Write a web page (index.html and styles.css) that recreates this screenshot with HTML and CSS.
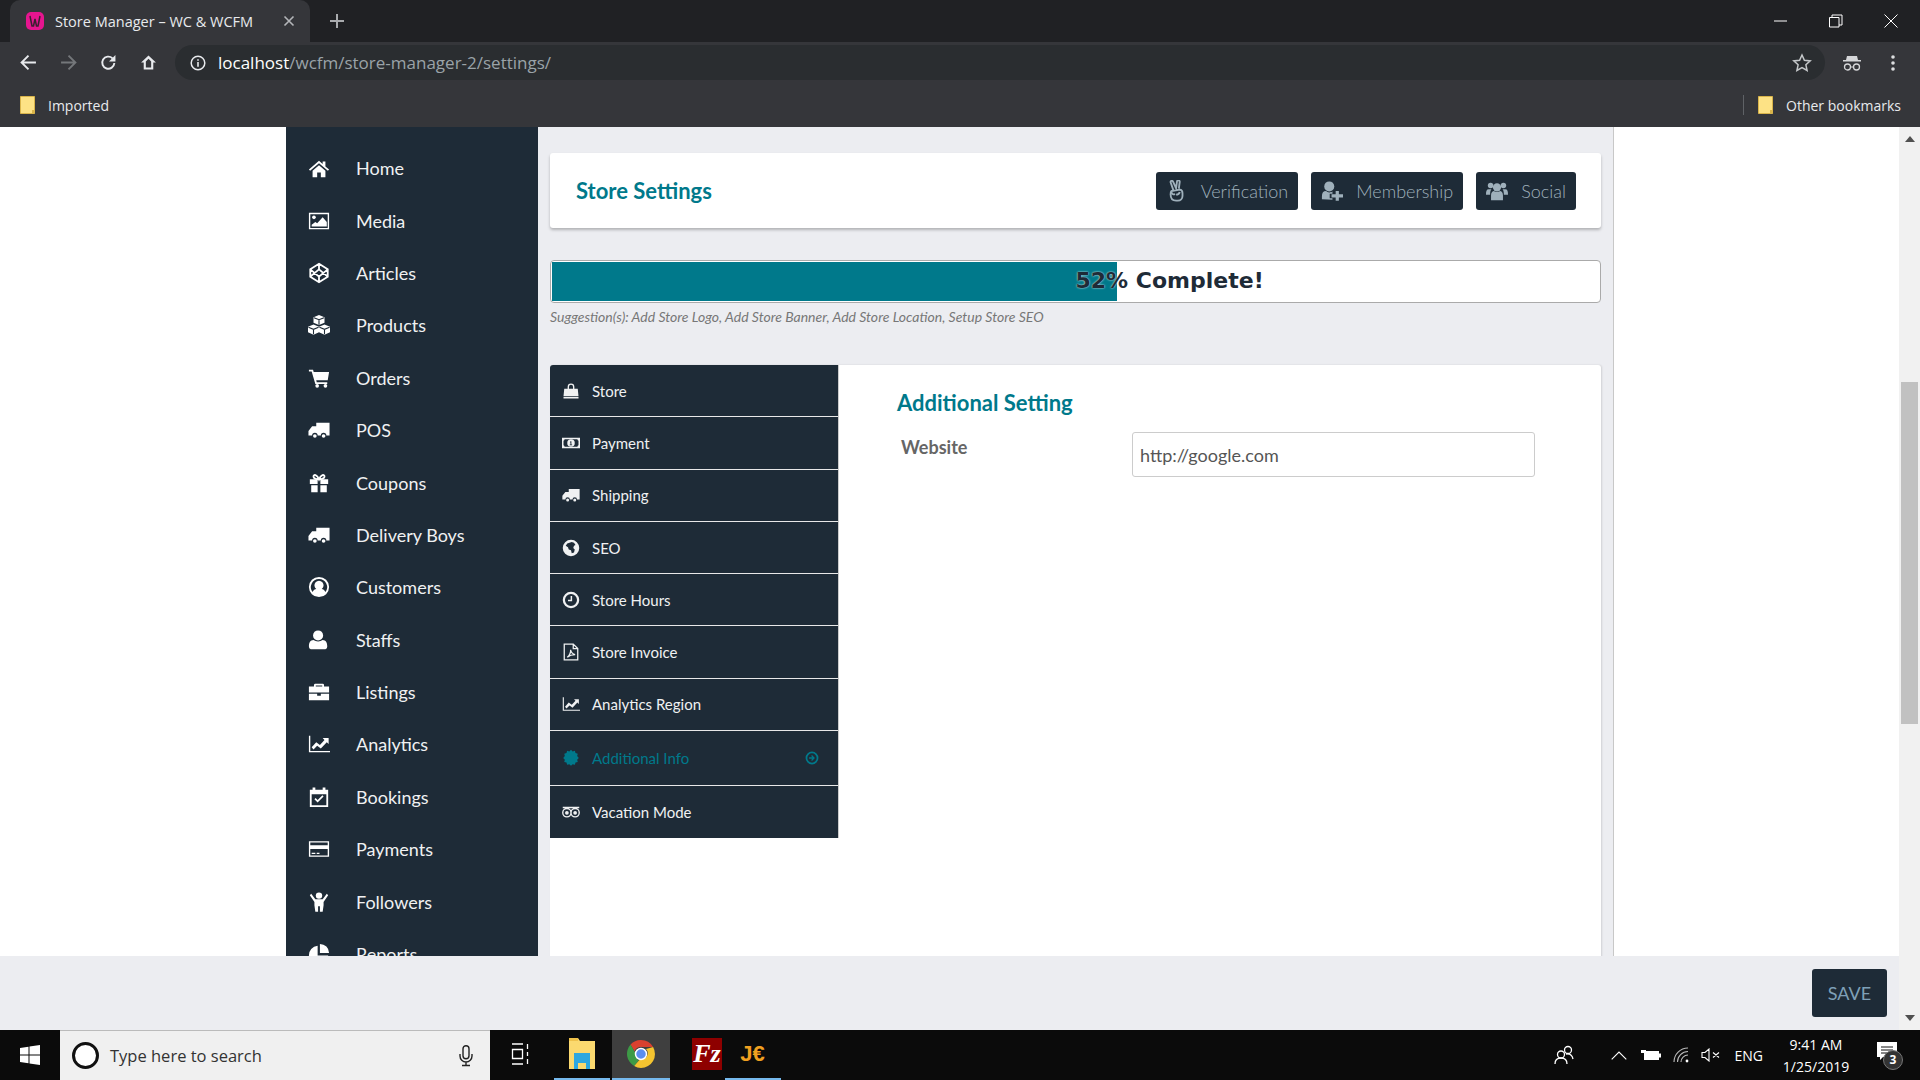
FILE: index.html
```html
<!DOCTYPE html>
<html>
<head>
    <title>Store Manager - WC &amp; WCFM</title>
    <link rel="stylesheet" href="styles.css">
</head>
<body>
<svg class="sprite" xmlns="http://www.w3.org/2000/svg">
    <symbol id="i-home" viewBox="0 0 24 24"><path d="M12 9l-7 6v7h5v-5h4v5h5v-7zM12 4L1 13.5l1.3 1.5L12 6.8l9.700 8.200 1.300-1.500L19 10.300V5h-3v2.700z"/></symbol>
    <symbol id="i-image" viewBox="0 0 24 24"><path fill-rule="evenodd" d="M1 3h22v18H1zM2.500 4.500v15h19v-15z"/><circle cx="6.500" cy="8" r="2"/><path d="M4 18v-2l4-3 2 1.500L16 8l4.500 5v5z"/></symbol>
    <symbol id="i-cube" viewBox="0 0 24 24"><path fill="none" stroke="currentColor" stroke-width="2" d="M12 2l9.500 6v8L12 22l-9.500-6V8zM12 2v6M12 16v6M2.500 8L12 16l9.500-8M2.500 16L12 8l9.500 8"/></symbol>
    <symbol id="i-cubes" viewBox="0 0 24 24"><path d="M12 1l6 2.500v6L12 12 6 9.500v-6zM6 11.500l6 2.500v6l-6 2.500-6-2.500v-6zM18 11.500l6 2.500v6l-6 2.500-6-2.500v-6z"/><path fill="none" stroke="#1e2b37" stroke-width="1.200" d="M6.500 4L12 6.200 17.500 4M12 6.200v5.500M.5 14.500L6 16.700l5.500-2.200M6 16.700V22M12.500 14.500l5.500 2.200 5.500-2.200M18 16.700V22"/></symbol>
    <symbol id="i-cart" viewBox="0 0 24 24"><path d="M1 3h4.500l.7 2.500H23l-1.500 9H9l.5 2H21v2H8L4 5H1z"/><circle cx="10" cy="20.500" r="2"/><circle cx="19" cy="20.500" r="2"/></symbol>
    <symbol id="i-truck" viewBox="0 0 24 24"><path d="M9 4h14.500v14H20a3 3 0 0 0-6 0h-3.500a3 3 0 0 0-6 0H.5v-5l4-5H9z"/><circle cx="7.500" cy="18.500" r="2"/><circle cx="17" cy="18.500" r="2"/></symbol>
    <symbol id="i-gift" viewBox="0 0 24 24"><path d="M2 8h8.500v5H2zM13.500 8H22v5h-8.500zM3.500 14.500h7V22h-7zM13.500 14.500h7V22h-7z"/><path fill="none" stroke="currentColor" stroke-width="2" d="M12 8C10 3 6 2 6 5s3 3 6 3c3 0 6 0 6-3s-4-2-6 3z"/></symbol>
    <symbol id="i-user-circle" viewBox="0 0 24 24"><path fill-rule="evenodd" d="M12 1a11 11 0 1 0 0 22 11 11 0 0 0 0-22zm0 2.200a8.800 8.800 0 0 1 7 14.200c-1-2-2.500-3-4-3.200a5 5 0 1 0-6 0c-1.500.2-3 1.200-4 3.200A8.800 8.800 0 0 1 12 3.200z"/></symbol>
    <symbol id="i-user" viewBox="0 0 24 24"><circle cx="11" cy="7" r="5.500"/><path d="M3 22a3 3 0 0 1-2-3c0-4 1.500-7 5-7 1.500 1 3 1.500 5 1.500s3.500-.5 5-1.500c3.500 0 5 3 5 7a3 3 0 0 1-2 3z"/></symbol>
    <symbol id="i-brief" viewBox="0 0 24 24"><path fill-rule="evenodd" d="M8 3h8a1.500 1.500 0 0 1 1.500 1.500V6H23v6.500H1V6h5.500V4.500A1.500 1.500 0 0 1 8 3zm.500 1.800V6h7V4.800z"/><path d="M1 14h9v2h4v-2h9v7H1z"/></symbol>
    <symbol id="i-chart" viewBox="0 0 24 24"><path d="M1 3h1.500v16.500H24V21H1z"/><path d="M4 15.500L9 10l4 3 5-5.500-2-2h6.500V12l-2-2-6.500 7-4-3-4 4z"/></symbol>
    <symbol id="i-cal" viewBox="0 0 24 24"><path fill-rule="evenodd" d="M5 1.500h3V4h8V1.500h3V4h3v19H2V4h3zM4 9v12h16V9z"/><path d="M7 14.500l1.300-1.300 2.200 2.200 5.200-5.200 1.300 1.300-6.500 6.500z"/></symbol>
    <symbol id="i-card" viewBox="0 0 24 24"><path fill-rule="evenodd" d="M1 3.500h22v17H1zM2.500 12v7h19v-7zM2.500 5v3h19V5z"/><path d="M4 16h4v1.500H4zM9.500 16h3v1.500h-3z"/></symbol>
    <symbol id="i-child" viewBox="0 0 24 24"><circle cx="12" cy="5" r="3.500"/><path d="M3.500 3L8 9h8l4.500-6L22 4.500 17 12v3.500l-1 7h-3v-6h-2v6H8l-1-7V12L2 4.500z"/></symbol>
    <symbol id="i-pie" viewBox="0 0 24 24"><path d="M10.500 3v10.500H22A10.500 10.500 0 1 1 10.500 3zM13 1a10 10 0 0 1 10 10H13z"/></symbol>
    <symbol id="i-bag" viewBox="0 0 24 24"><path fill-rule="evenodd" d="M3 9h4.500V6.500a4.500 4.500 0 0 1 9 0V9H21l1 10H2zM9.300 9h5.400V6.500a2.700 2.700 0 0 0-5.400 0z"/><path d="M2 20h20v2H2z"/></symbol>
    <symbol id="i-money" viewBox="0 0 24 24"><path fill-rule="evenodd" d="M0 5h24v14H0zM3.500 7A3 3 0 0 1 2 9v6a3 3 0 0 1 1.500 2h17a3 3 0 0 1 1.500-2V9a3 3 0 0 1-1.500-2z"/><path fill-rule="evenodd" d="M12 7a5 5 0 1 0 0 10 5 5 0 0 0 0-10zm-.8 2.500h1.300v4.500h1v1h-3.200v-1h1v-3l-.8.500z"/></symbol>
    <symbol id="i-globe" viewBox="0 0 24 24"><path d="M12 1a11 11 0 1 0 0 22 11 11 0 0 0 0-22zm1 3l3 1 2 3-2 1-1 3 2 2-1 4-3 1-1-4-3-1-1-3-3-2 2-3 3-1z"/></symbol>
    <symbol id="i-clock" viewBox="0 0 24 24"><path fill-rule="evenodd" d="M12 1a11 11 0 1 0 0 22 11 11 0 0 0 0-22zm0 3a8 8 0 1 1 0 16 8 8 0 0 1 0-16z"/><path d="M13.500 6.500v7H8v-2h3.500v-5z"/></symbol>
    <symbol id="i-pdf" viewBox="0 0 24 24"><path fill="none" stroke="currentColor" stroke-width="1.700" d="M3 1.500h12l6 6v15H3zM15 1.500v6h6M7 19c3-2 5-7 4.500-10 0 3 3 6 6 6.500-3 0-7.500 1-10.500 3.500z"/></symbol>
    <symbol id="i-cert" viewBox="0 0 24 24"><path d="M12 1l2.200 2.200 3-.8.800 3 3 .8-.8 3L22.400 12l-2.200 2.200.8 3-3 .8-.8 3-3-.8L12 22.400l-2.200-2.200-3 .8-.8-3-3-.8.800-3L1.600 12l2.200-2.800-.8-3 3-.8.800-3 3 .8z"/></symbol>
    <symbol id="i-trip" viewBox="0 0 24 24"><path fill="none" stroke="currentColor" stroke-width="1.800" d="M1 6h22M6.500 7.500a5.500 5.500 0 1 0 0 11 5.500 5.500 0 0 0 0-11zM17.500 7.500a5.500 5.500 0 1 0 0 11 5.500 5.500 0 0 0 0-11z"/><circle cx="6.500" cy="13" r="2.500"/><circle cx="17.500" cy="13" r="2.500"/></symbol>
    <symbol id="i-arrow-c" viewBox="0 0 24 24"><path fill-rule="evenodd" d="M12 1a11 11 0 1 0 0 22 11 11 0 0 0 0-22zm0 3a8 8 0 1 1 0 16 8 8 0 0 1 0-16z"/><path d="M12 7l5 5-5 5-1.500-1.500 2.200-2.200H7v-2.600h5.700L10.500 8.500z"/></symbol>
    <symbol id="i-peace" viewBox="0 0 24 24"><path fill="none" stroke="currentColor" stroke-width="2" d="M8 11L5 2.500c-.5-1.500 2-2.300 2.700-.8L11 9l1-7.500c.3-1.500 3-1.300 3 .3L14 9.500M6 12l9-1.500c2 0 3 1.500 3 4v3a5 5 0 0 1-5 5H11c-4 0-6-3-6-7 0-2 .5-3 1-3.500zM6 13c0 2 2 3 4 2.500M11 16c2 0 3.500-1 4-3"/></symbol>
    <symbol id="i-user-plus" viewBox="0 0 24 24"><circle cx="9" cy="7" r="5.500"/><path d="M1 21v-3c0-4 1.500-6 4.500-6 1 1 2.200 1.500 3.500 1.500 1.500 0 2.500-.3 3.500-1v2.500h-3v5h3v1.500zM16 12h3.500v3.500H24v3.500h-4.500v3.500H16V19h-4.500v-3.500H16z"/></symbol>
    <symbol id="i-users" viewBox="0 0 24 24"><circle cx="5" cy="6" r="3"/><circle cx="19" cy="6" r="3"/><circle cx="12" cy="8" r="4.500"/><path d="M0 16c0-4 .5-6 3-6h3c-1 1-1.500 3-1.500 6zM24 16c0-4-.5-6-3-6h-3c1 1 1.500 3 1.500 6zM5.500 22v-5c0-3 1-4.500 3-5 1 .7 2.200 1 3.500 1s2.500-.3 3.500-1c2 .5 3 2 3 5v5z"/></symbol>
</svg>

<div class="screen">
    <div class="tabstrip">
        <div class="tab">
            <svg class="favicon" viewBox="0 0 20 20"><rect x="1" y="1" width="18" height="18" rx="5" fill="#e6158f"/><path d="M5 5l2 10h1.500L10 8l1.500 7H13l2-10" fill="none" stroke="#3a2030" stroke-width="1.500"/></svg>
            <span class="tab-title">Store Manager – WC &amp; WCFM</span>
            <svg class="tab-close" viewBox="0 0 12 12"><path d="M1.500 1.500l9 9M10.500 1.500l-9 9" stroke="#b4b6b9" stroke-width="1.600"/></svg>
        </div>
        <svg class="tab-new" viewBox="0 0 16 16"><path d="M8 1v14M1 8h14" stroke="#a9abae" stroke-width="2"/></svg>
        <div class="win-controls">
            <svg viewBox="0 0 14 14"><path d="M0 7h13" stroke="#fff"/></svg>
            <svg viewBox="0 0 14 14"><path d="M.5 3.500h9.500v9.500H.5zM3 3.500V1h10v10h-3" fill="none" stroke="#fff"/></svg>
            <svg viewBox="0 0 14 14"><path d="M.5.5l13 13M13.500.5l-13 13" stroke="#fff"/></svg>
        </div>
    </div>

    <div class="toolbar">
        <svg class="tool" viewBox="0 0 16 16"><path d="M15 8H2M8 1.500L1.500 8 8 14.500" fill="none" stroke="#e8eaed" stroke-width="1.800"/></svg>
        <svg class="tool" viewBox="0 0 16 16"><path d="M1 8h13M8 1.500L14.500 8 8 14.500" fill="none" stroke="#74777a" stroke-width="1.800"/></svg>
        <svg class="tool" viewBox="0 0 16 16"><path d="M13.500 8.500a5.700 5.700 0 1 1-1.700-4.400" fill="none" stroke="#e8eaed" stroke-width="1.800"/><path d="M14.500 1v6h-6z" fill="#e8eaed"/></svg>
        <svg class="tool" viewBox="0 0 16 16"><path d="M8 1.500L1 8h2.500v6.500h9V8H15zM5.500 12.800V7L8 4.500 10.500 7v5.800z" fill="#e8eaed" fill-rule="evenodd"/></svg>
        <div class="omnibox">
            <svg class="omni-info" viewBox="0 0 16 16"><circle cx="8" cy="8" r="6.800" fill="none" stroke="#e8eaed" stroke-width="1.500"/><path d="M7.200 7h1.600v4.800H7.200zM7.200 4.200h1.600v1.600H7.200z" fill="#e8eaed"/></svg>
            <span class="url"><b>localhost</b>/wcfm/store-manager-2/settings/</span>
            <svg class="omni-star" viewBox="0 0 20 20"><path d="M10 2l2.400 5.300 5.800.6-4.300 3.900 1.200 5.700L10 14.600l-5.100 2.900 1.200-5.700L1.800 7.900l5.800-.6z" fill="none" stroke="#c4c7c9" stroke-width="1.500"/></svg>
        </div>
        <svg class="tool-incog" viewBox="0 0 20 18"><path d="M5 2h10l1 4h3v1.500H1V6h3z" fill="#d5d6d8"/><circle cx="5.500" cy="13" r="3" fill="none" stroke="#d5d6d8" stroke-width="1.300"/><circle cx="14.500" cy="13" r="3" fill="none" stroke="#d5d6d8" stroke-width="1.300"/><path d="M8.500 13h3" stroke="#d5d6d8"/></svg>
        <svg class="tool-menu" viewBox="0 0 4 16"><circle cx="2" cy="2" r="1.800" fill="#dcdee0"/><circle cx="2" cy="8" r="1.800" fill="#dcdee0"/><circle cx="2" cy="14" r="1.800" fill="#dcdee0"/></svg>
    </div>

    <div class="bookmarks">
        <svg class="folder" viewBox="0 0 15 18"><path d="M.5.500h14v17H.5z" fill="#fde285" stroke="#d9b44a"/><path d="M12 14h2.500v3.500H12z" fill="#d9b44a"/></svg>
        <span class="bm-label">Imported</span>
        <span class="bm-spacer"></span>
        <span class="bm-divider"></span>
        <svg class="folder" viewBox="0 0 15 18"><path d="M.5.500h14v17H.5z" fill="#fde285" stroke="#d9b44a"/><path d="M12 14h2.500v3.500H12z" fill="#d9b44a"/></svg>
        <span class="bm-label">Other bookmarks</span>
    </div>

    <div class="page">
        <div class="viewport">
            <div class="content">
                <nav class="sidebar">
                    <a class="side-item"><svg class="side-icon"><use href="#i-home"/></svg>Home</a>
                    <a class="side-item"><svg class="side-icon"><use href="#i-image"/></svg>Media</a>
                    <a class="side-item"><svg class="side-icon"><use href="#i-cube"/></svg>Articles</a>
                    <a class="side-item"><svg class="side-icon"><use href="#i-cubes"/></svg>Products</a>
                    <a class="side-item"><svg class="side-icon"><use href="#i-cart"/></svg>Orders</a>
                    <a class="side-item"><svg class="side-icon"><use href="#i-truck"/></svg>POS</a>
                    <a class="side-item"><svg class="side-icon"><use href="#i-gift"/></svg>Coupons</a>
                    <a class="side-item"><svg class="side-icon"><use href="#i-truck"/></svg>Delivery Boys</a>
                    <a class="side-item"><svg class="side-icon"><use href="#i-user-circle"/></svg>Customers</a>
                    <a class="side-item"><svg class="side-icon"><use href="#i-user"/></svg>Staffs</a>
                    <a class="side-item"><svg class="side-icon"><use href="#i-brief"/></svg>Listings</a>
                    <a class="side-item"><svg class="side-icon"><use href="#i-chart"/></svg>Analytics</a>
                    <a class="side-item"><svg class="side-icon"><use href="#i-cal"/></svg>Bookings</a>
                    <a class="side-item"><svg class="side-icon"><use href="#i-card"/></svg>Payments</a>
                    <a class="side-item"><svg class="side-icon"><use href="#i-child"/></svg>Followers</a>
                    <a class="side-item"><svg class="side-icon"><use href="#i-pie"/></svg>Reports</a>
                </nav>
                <main class="main">
                    <header class="head-card">
                        <h2 class="head-title">Store Settings</h2>
                        <div class="head-actions">
                            <a class="head-btn"><svg class="btn-icon"><use href="#i-peace"/></svg>Verification</a>
                            <a class="head-btn"><svg class="btn-icon"><use href="#i-user-plus"/></svg>Membership</a>
                            <a class="head-btn"><svg class="btn-icon"><use href="#i-users"/></svg>Social</a>
                        </div>
                    </header>
                    <div class="progress">
                        <div class="progress-fill" style="width: 54%"></div>
                        <span class="progress-label">52% Complete!</span>
                    </div>
                    <p class="suggestion">Suggestion(s): Add Store Logo, Add Store Banner, Add Store Location, Setup Store SEO</p>
                    <section class="panel">
                        <ul class="tabs">
                            <li class="tab-row"><svg class="tab-icon"><use href="#i-bag"/></svg>Store</li>
                            <li class="tab-row"><svg class="tab-icon"><use href="#i-money"/></svg>Payment</li>
                            <li class="tab-row"><svg class="tab-icon"><use href="#i-truck"/></svg>Shipping</li>
                            <li class="tab-row"><svg class="tab-icon"><use href="#i-globe"/></svg>SEO</li>
                            <li class="tab-row"><svg class="tab-icon"><use href="#i-clock"/></svg>Store Hours</li>
                            <li class="tab-row"><svg class="tab-icon"><use href="#i-pdf"/></svg>Store Invoice</li>
                            <li class="tab-row"><svg class="tab-icon"><use href="#i-chart"/></svg>Analytics Region</li>
                            <li class="tab-row active"><svg class="tab-icon"><use href="#i-cert"/></svg>Additional Info<svg class="tab-arrow"><use href="#i-arrow-c"/></svg></li>
                            <li class="tab-row"><svg class="tab-icon"><use href="#i-trip"/></svg>Vacation Mode</li>
                        </ul>
                        <div class="pane">
                            <h3 class="pane-title">Additional Setting</h3>
                            <div class="field">
                                <label class="field-label">Website</label>
                                <input class="field-input" type="text" value="http://google.com">
                            </div>
                        </div>
                    </section>
                </main>
            </div>
            <div class="savebar"><button class="save">SAVE</button></div>
        </div>
        <div class="scrollbar">
            <svg class="scroll-arrow" viewBox="0 0 10 6"><path d="M5 0l5 6H0z"/></svg>
            <div class="scroll-thumb"></div>
            <svg class="scroll-arrow" viewBox="0 0 10 6"><path d="M0 0h10L5 6z"/></svg>
        </div>
    </div>

    <footer class="taskbar">
        <div class="start"><svg viewBox="0 0 20 20" width="20" height="20"><path d="M0 3l8.500-1.200V9.500H0zM9.500 1.600L20 0v9.500H9.500zM0 10.500h8.500v7.700L0 17zM9.500 10.500H20V20L9.500 18.400z" fill="#fff"/></svg></div>
        <div class="search">
            <span class="cortana"></span>
            <span class="search-text">Type here to search</span>
            <svg class="mic" viewBox="0 0 14 22"><rect x="4" y=".7" width="6" height="13" rx="3" fill="none" stroke="#222" stroke-width="1.400"/><path d="M1 9v2a6 6 0 0 0 12 0V9M7 17v3M3 20.500h8" fill="none" stroke="#222" stroke-width="1.400"/></svg>
        </div>
        <div class="task-apps">
            <div class="app taskview"><svg viewBox="0 0 20 22" width="20" height="22"><path d="M1 1h11M1 21h11M1.500 6.500h10v9h-10zM16.500 1v5M16.500 9v4M16.500 16v5" fill="none" stroke="#fff" stroke-width="1.300"/></svg></div>
            <div class="app running"><svg viewBox="0 0 28 34" width="28" height="34"><path d="M1 1h9l2 3h15v28H1z" fill="#fbd96f"/><path d="M1 1h9v3H1z" fill="#f0c24b"/><path d="M6 16h16v16h-4v-6h-8v6H6z" fill="#2ea7e0"/></svg></div>
            <div class="app running current"><svg viewBox="0 0 30 30" width="30" height="30"><path d="M15 1a14 14 0 0 1 12.100 7H15a7 7 0 0 0-6.500 4.400L4.500 5.500A14 14 0 0 1 15 1z" fill="#d9412f"/><path d="M4.500 5.500l6.200 10.800a5 5 0 0 0 2 5.200L8.200 27A14 14 0 0 1 4.500 5.500z" fill="#3d9a46"/><path d="M27.100 8A14 14 0 0 1 15 29c-2.500 0-4.800-.7-6.800-2l6-7a6 6 0 0 0 5.800-10z" fill="#f4c430"/><circle cx="15" cy="15" r="5.500" fill="#5b8def" stroke="#fff" stroke-width="1.500"/></svg></div>
            <div class="app"><span class="fz">Fz</span></div>
            <div class="app running"><span class="je">J€</span></div>
        </div>
        <div class="tray">
            <svg class="tray-people" viewBox="0 0 22 20"><circle cx="14" cy="5" r="3.500" fill="none" stroke="#fff" stroke-width="1.300"/><circle cx="7" cy="9.500" r="3.500" fill="none" stroke="#fff" stroke-width="1.300"/><path d="M1 19c0-4 2.500-6 6-6s6 2 6 6M12 9c3-.5 6 0 7 5" fill="none" stroke="#fff" stroke-width="1.300"/></svg>
            <svg class="tray-chevron" viewBox="0 0 16 9"><path d="M.7 8.300L8 1l7.300 7.300" fill="none" stroke="#fff" stroke-width="1.100"/></svg>
            <svg class="tray-batt" viewBox="0 0 20 14"><path d="M3 3h15v9H3z" fill="#fff"/><path d="M18 5.500h2v4h-2z" fill="#fff"/><path d="M0 2h5v3H0z" fill="#fff"/></svg>
            <svg class="tray-wifi" viewBox="0 0 16 16"><path d="M1 15A14 14 0 0 1 15 1M4.500 15A10.500 10.500 0 0 1 15 4.500M8 15a7 7 0 0 1 7-7" fill="none" stroke="#bbb" stroke-width="1.100"/><circle cx="14" cy="14" r="1.400" fill="#fff"/></svg>
            <svg class="tray-sound" viewBox="0 0 20 14"><path d="M1 4.500h3L8 1v12L4 9.500H1zM12 4.500l6 5M18 4.500l-6 5" fill="none" stroke="#fff" stroke-width="1.100"/></svg>
            <span class="tray-lang">ENG</span>
            <div class="tray-clock"><span>9:41 AM</span><span>1/25/2019</span></div>
            <div class="tray-notify">
                <svg viewBox="0 0 20 18" width="20" height="18"><path d="M0 0h20v15H6l-3 3v-3H0z" fill="#fff"/><path d="M4 5h12M4 8h12M4 11h9" stroke="#111"/></svg>
                <span class="notify-badge">3</span>
            </div>
        </div>
    </footer>
</div>
</body>
</html>
```

FILE: styles.css
```css
* {
    box-sizing: border-box;
}
html, body {
    margin: 0;
    padding: 0;
}
body {
    font-family: "Lato", "Noto Sans", sans-serif;
    overflow: hidden;
}
.sprite {
    display: none;
}
.screen {
    display: flex;
    flex-direction: column;
    width: 1920px;
    height: 1080px;
    overflow: hidden;
}

/* browser chrome */
.tabstrip {
    display: flex;
    align-items: flex-end;
    height: 42px;
    padding-left: 10px;
    background: #202124;
}
.tab {
    display: flex;
    align-items: center;
    width: 300px;
    height: 42px;
    padding: 0 15px;
    background: #35363a;
    border-radius: 10px 10px 0 0;
    color: #e8eaed;
    font-family: "Open Sans", sans-serif;
    font-size: 14.500px;
}
.favicon {
    width: 20px;
    height: 20px;
    margin-right: 10px;
}
.tab-title {
    flex: 1;
    white-space: nowrap;
}
.tab-close {
    width: 12px;
    height: 12px;
}
.tab-new {
    width: 16px;
    height: 16px;
    margin: 0 0 13px 19px;
}
.win-controls {
    display: flex;
    gap: 41px;
    align-items: center;
    height: 42px;
    margin-left: auto;
    padding-right: 22px;
}
.win-controls svg {
    width: 14px;
    height: 14px;
}
.toolbar {
    display: flex;
    align-items: center;
    height: 41px;
    padding-left: 20px;
    background: #35363a;
}
.tool {
    width: 17px;
    height: 17px;
    margin-right: 23px;
}
.omnibox {
    display: flex;
    align-items: center;
    width: 1650px;
    height: 35px;
    margin-left: -5px;
    padding: 0 13px 0 15px;
    background: #2a2d30;
    border-radius: 18px;
}
.omni-info {
    width: 16px;
    height: 16px;
    margin-right: 12px;
}
.url {
    flex: 1;
    color: #9aa3a8;
    font-family: "Open Sans", sans-serif;
    font-size: 17px;
    white-space: nowrap;
}
.url b {
    color: #fff;
    font-weight: 400;
}
.omni-star {
    width: 20px;
    height: 20px;
}
.tool-incog {
    width: 20px;
    height: 18px;
    margin-left: 17px;
}
.tool-menu {
    width: 4px;
    height: 16px;
    margin-left: 29px;
}
.bookmarks {
    display: flex;
    align-items: center;
    height: 44px;
    padding: 0 19px 0 20px;
    background: #35363a;
    color: #e8eaed;
    font-family: "Open Sans", sans-serif;
    font-size: 14px;
}
.folder {
    width: 15px;
    height: 18px;
    margin-right: 13px;
}
.bm-spacer {
    flex: 1;
}
.bm-divider {
    width: 1px;
    height: 20px;
    margin-right: 14px;
    background: #5f6266;
}

/* page */
.page {
    display: flex;
    height: 903px;
    background: #fff;
}
.viewport {
    display: flex;
    flex: 1;
    flex-direction: column;
    min-width: 0;
}
.content {
    display: flex;
    flex: 1;
    min-height: 0;
    padding-left: 286px;
    overflow: hidden;
}
.sidebar {
    flex: none;
    width: 252px;
    padding-top: 15px;
    background: #1e2b37;
}
.side-item {
    display: flex;
    align-items: center;
    height: 52.400px;
    padding-left: 22px;
    color: #f0f1f2;
    font-size: 18px;
}
.side-icon {
    flex: none;
    width: 22px;
    height: 22px;
    margin-right: 26px;
    fill: currentColor;
    color: #fff;
}
.main {
    flex: none;
    width: 1076px;
    padding: 26px 12px 0;
    background: #ecedf1;
    border-right: 1px solid #c8c8c8;
}
.head-card {
    display: flex;
    align-items: center;
    justify-content: space-between;
    height: 75px;
    padding: 0 25px 0 26px;
    background: #fff;
    border-radius: 3px;
    box-shadow: 0 2px 3px rgba(0, 0, 0, 0.25);
}
.head-title {
    margin: 0;
    color: #00798b;
    font-size: 22px;
    font-weight: 700;
}
.head-actions {
    display: flex;
    gap: 13px;
}
.head-btn {
    display: flex;
    align-items: center;
    height: 38px;
    padding: 0 10px;
    background: #1e2b37;
    border-radius: 3px;
    color: #9fb0bb;
    font-size: 18px;
    font-weight: 300;
}
.btn-icon {
    width: 22px;
    height: 22px;
    margin-right: 13px;
    fill: currentColor;
}
.progress {
    position: relative;
    height: 43px;
    margin-top: 32px;
    padding: 1px;
    background: #fff;
    border: 1px solid #aaa;
    border-radius: 4px;
    overflow: hidden;
}
.progress-fill {
    height: 100%;
    background: #00798b;
}
.progress-label {
    position: absolute;
    top: 7px;
    left: 50%;
    color: #1e2b37;
    font-family: "DejaVu Sans", sans-serif;
    font-size: 22px;
    font-weight: 700;
    text-shadow: 0 0 2px #fff;
    white-space: nowrap;
}
.suggestion {
    margin: 5px 0 0;
    height: 57px;
    color: #777;
    font-size: 14px;
    font-style: italic;
}
.panel {
    display: flex;
    min-height: 600px;
    background: #fff;
    border-radius: 3px 3px 0 0;
    box-shadow: 1px 0 2px rgba(0, 0, 0, 0.12);
}
.tabs {
    flex: none;
    align-self: flex-start;
    width: 289px;
    margin: 0;
    padding: 0;
    list-style: none;
    border-right: 1px solid #ccc;
}
.tab-row {
    display: flex;
    align-items: center;
    height: 52.300px;
    padding-left: 12px;
    background: #1e2b37;
    border-bottom: 1px solid #e8e8e8;
    color: #f0f1f2;
    font-size: 15px;
}
.tab-row:first-child {
    border-top-left-radius: 3px;
}
.tab-row:last-child {
    border-bottom: 0;
}
.tab-row.active {
    height: 55px;
    color: #00798b;
}
.tab-icon {
    flex: none;
    width: 18px;
    height: 18px;
    margin-right: 12px;
    fill: currentColor;
}
.tab-arrow {
    width: 14px;
    height: 14px;
    margin-left: auto;
    margin-right: 19px;
    fill: currentColor;
}
.pane {
    flex: 1;
    padding: 24px 0 0 58px;
}
.pane-title {
    margin: 0;
    color: #00798b;
    font-size: 22px;
    font-weight: 700;
}
.field {
    display: flex;
    margin-top: 16px;
}
.field-label {
    width: 235px;
    padding: 4px 0 0 4px;
    color: #666;
    font-size: 18px;
    font-weight: 700;
}
.field-input {
    width: 403px;
    height: 45px;
    padding: 0 7px;
    border: 1px solid #ccc;
    border-radius: 3px;
    color: #555;
    font-family: "Lato", sans-serif;
    font-size: 18px;
}
.savebar {
    display: flex;
    align-items: flex-start;
    justify-content: flex-end;
    flex: none;
    height: 74px;
    padding: 13px 12px 0 0;
    background: #ecedf1;
}
.save {
    width: 75px;
    height: 48px;
    background: #1e2b37;
    border: 0;
    border-radius: 3px;
    color: #7ea0b8;
    font-family: "Lato", sans-serif;
    font-size: 18px;
}
.scrollbar {
    display: flex;
    flex: none;
    flex-direction: column;
    align-items: center;
    width: 21px;
    padding: 9px 0;
    background: #f1f1f1;
}
.scroll-arrow {
    width: 10px;
    height: 6px;
    fill: #505050;
}
.scroll-thumb {
    width: 17px;
    height: 342px;
    margin: 240px 0 auto;
    background: #c1c1c1;
}

/* windows taskbar */
.taskbar {
    display: flex;
    align-items: stretch;
    height: 50px;
    background: #0b0b0b;
    color: #fff;
    font-family: "Open Sans", sans-serif;
}
.start {
    display: flex;
    align-items: center;
    justify-content: center;
    width: 60px;
}
.search {
    display: flex;
    align-items: center;
    width: 430px;
    padding: 0 17px 0 12px;
    background: #f0f0f0;
    border-top: 1px solid #bbb;
    color: #333;
    font-size: 16.500px;
}
.cortana {
    width: 27px;
    height: 27px;
    margin-right: 11px;
    background: #fff;
    border: 3px solid #111;
    border-radius: 50%;
}
.search-text {
    flex: 1;
}
.mic {
    width: 14px;
    height: 22px;
}
.task-apps {
    display: flex;
    margin-left: 5px;
}
.app {
    display: flex;
    align-items: center;
    justify-content: center;
    width: 56px;
    margin-right: -.5px;
    border-bottom: 2px solid transparent;
}
.app.taskview {
    width: 51px;
    margin-right: 8px;
}
.app.running {
    border-bottom-color: #76b9ed;
}
.app.current {
    width: 58px;
    margin-left: 2px;
    background: #3f3f3f;
}
.fz {
    width: 30px;
    height: 32px;
    margin-left: 20px;
    background: #8e0000;
    color: #fff;
    font-family: "Liberation Serif", serif;
    font-size: 26px;
    font-style: italic;
    font-weight: 700;
    line-height: 32px;
    text-align: center;
}
.je {
    color: #f0a020;
    font-family: "Liberation Sans", sans-serif;
    font-size: 22px;
    font-weight: 700;
}
.tray {
    display: flex;
    align-items: center;
    margin-left: auto;
    padding-right: 17px;
    font-size: 14px;
}
.tray-people {
    width: 22px;
    height: 20px;
    margin-right: 35px;
}
.tray-chevron {
    width: 16px;
    height: 9px;
    margin-right: 14px;
}
.tray-batt {
    width: 20px;
    height: 14px;
    margin-right: 12px;
}
.tray-wifi {
    width: 16px;
    height: 16px;
    margin-right: 12px;
}
.tray-sound {
    width: 20px;
    height: 14px;
    margin-right: 14px;
}
.tray-lang {
    margin-right: 18px;
}
.tray-clock {
    display: flex;
    flex-direction: column;
    align-items: center;
    gap: 3px;
    width: 70px;
    margin-right: 26px;
    line-height: 19px;
}
.tray-notify {
    position: relative;
    width: 26px;
    height: 26px;
}
.notify-badge {
    position: absolute;
    right: 0;
    bottom: -2px;
    width: 20px;
    height: 20px;
    background: #333;
    border: 1px solid #777;
    border-radius: 50%;
    font-size: 12px;
    font-weight: 700;
    line-height: 18px;
    text-align: center;
}
```
